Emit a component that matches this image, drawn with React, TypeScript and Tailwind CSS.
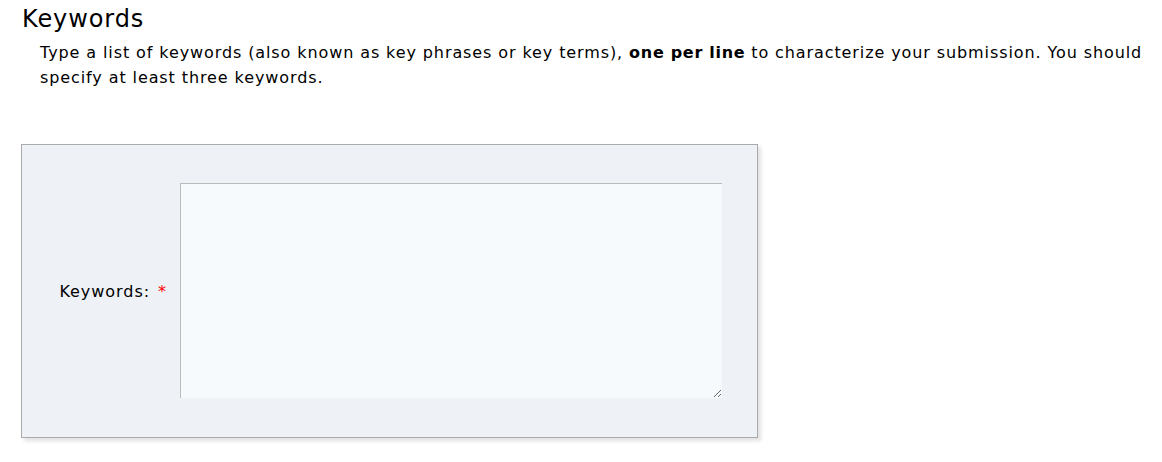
import React from "react";

export default function App() {
  return (
    <div className="w-[1162px] h-[462px] bg-white text-black" style={{ fontFamily: '"DejaVu Sans", Verdana, sans-serif' }}>
      <h2 className="pl-[22px] pt-[4px] text-[24px] leading-[30px] font-normal tracking-[0.9px]">Keywords</h2>
      <p className="pl-[40px] pr-[8px] pt-[6px] text-[16px] leading-[25px] tracking-[0.9px]">
        Type a list of keywords (also known as key phrases or key terms), <b className="tracking-[0.7px]">one per line</b> to characterize your submission. You should specify at least three keywords.
      </p>
      <div className="ml-[21px] mt-[54px] w-[737px] h-[294px] border border-[#aaaaaa] bg-[#eef1f5] shadow-[3px_3px_4px_rgba(0,0,0,0.12)] flex items-start">
        <div className="w-[158px] h-[294px] flex justify-end items-center text-[16px] pr-[13px] tracking-[0.95px]">
          <span>Keywords:</span>
          <span className="text-[#ff0000] ml-[8px]">*</span>
        </div>
        <textarea className="mt-[38px] w-[542px] h-[215px] bg-[#f7fafd] border-l border-t border-[#bbbbbb] outline-none resize" />
      </div>
    </div>
  );
}
